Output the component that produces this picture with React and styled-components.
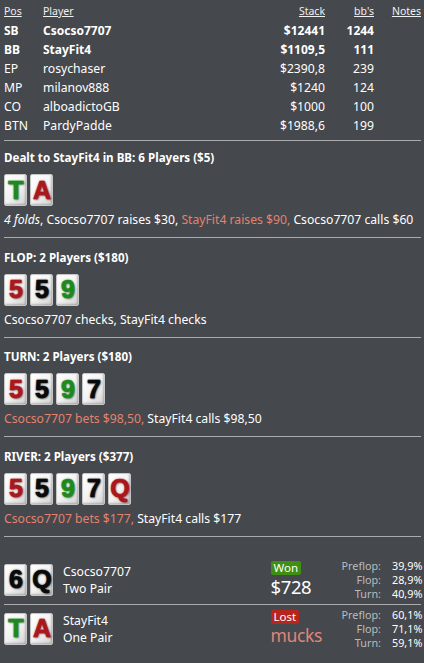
import styled, { createGlobalStyle } from 'styled-components'

const GlobalStyle = createGlobalStyle`
   html, body {
      margin: 0;
      background: #45484c;
   }
   body {
      font-family: 'Noto Sans', 'Open Sans', sans-serif;
      color: #ffffff;
      font-size: 12.2px;
   }
`

const Page = styled.div`
   padding: 0 3px 0 4px;
   width: 424px;
   box-sizing: border-box;
`

const PlayerTable = styled.div`
   display: grid;
   grid-template-columns: 39px 1fr auto 49px 47px;
   align-items: center;
   padding-top: 2px;
   padding-bottom: 5px;
`

const Head = styled.div`
   font-size: 10.5px;
   text-decoration: underline;
   text-align: ${(props) => (props.right ? 'right' : 'left')};
   line-height: 19px;
   color: #f0f0f0;
`

const Cell = styled.div`
   font-weight: ${(props) => (props.bold ? 700 : 400)};
   text-align: ${(props) => (props.right ? 'right' : 'left')};
   line-height: 19px;
   font-size: ${(props) => (props.bold ? '12px' : '12.2px')};
`

const Divider = styled.hr`
   border: 0;
   border-top: 1px solid #a9abad;
   margin: 0;
`

const Street = styled.section`
   padding: ${(props) => (props.first ? '8px' : '10.5px')} 0 8px;
   display: flex;
   flex-direction: column;
`

const Title = styled.div`
   font-weight: 700;
   font-size: 11.6px;
   line-height: 18px;
   margin-bottom: 7px;
`

const Cards = styled.div`
   display: flex;
   gap: 3px;
   margin-bottom: 5px;
`

const CardBox = styled.div`
   width: 23px;
   height: 32px;
   box-sizing: border-box;
   border: 1px solid #c6c6c6;
   border-radius: 2px;
   background: linear-gradient(135deg, #ffffff 0%, #f2f2f2 55%, #d2d2d2 100%);
   box-shadow: inset -1px -1px 2px rgba(0, 0, 0, 0.22);
   display: flex;
   align-items: center;
   justify-content: center;
   font-family: 'Liberation Sans', Arial, sans-serif;
   font-weight: 900;
   font-size: 25px;
   letter-spacing: -1px;
   color: ${(props) => props.tint};
   text-shadow: 0 0 2px ${(props) => props.tint}, 1px 1px 2px rgba(0, 0, 0, 0.4);
   -webkit-text-stroke: 0.7px ${(props) => props.tint};
`

const suitColor = {
   r: '#a8181c',
   g: '#1e8a1e',
   k: '#0a0a0a',
}

const Card = ({ rank, suit }) => <CardBox tint={suitColor[suit]}>{rank}</CardBox>

const Action = styled.div`
   line-height: 18px;
   white-space: nowrap;
`

const Hero = styled.span`
   color: #e3826f;
`

const Showdown = styled.div`
   display: grid;
   grid-template-columns: 59px 1fr 71px auto;
   align-items: center;
   padding: ${(props) => (props.last ? '3px 0 0' : '22px 0 3px')};
`

const Pair = styled.div`
   display: flex;
   gap: 3px;
`

const WhoCol = styled.div`
   line-height: 17px;
`

const ResultCol = styled.div`
   display: flex;
   flex-direction: column;
   align-items: flex-start;
`

const Badge = styled.span`
   background: ${(props) => (props.won ? '#3f8f14' : '#b7261d')};
   color: #fff;
   font-size: 11.5px;
   line-height: 13px;
   padding: 0 3px 1px;
   border-radius: 2px;
`

const Amount = styled.div`
   font-size: ${(props) => (props.lost ? '17.5px' : '18.5px')};
   letter-spacing: -0.4px;
   line-height: 23px;
   color: ${(props) => (props.lost ? '#e2857a' : '#ffffff')};
`

const Equity = styled.div`
   display: grid;
   grid-template-columns: auto 29px;
   column-gap: 11px;
   font-size: 10.8px;
   line-height: 14px;
   text-align: right;
`

const Label = styled.span`
   color: #b9bcbf;
`

const players = [
   ['SB', 'Csocso7707', '$12441', '1244', true],
   ['BB', 'StayFit4', '$1109,5', '111', true],
   ['EP', 'rosychaser', '$2390,8', '239'],
   ['MP', 'milanov888', '$1240', '124'],
   ['CO', 'alboadictoGB', '$1000', '100'],
   ['BTN', 'PardyPadde', '$1988,6', '199'],
]

const board = [
   ['5', 'r'],
   ['5', 'k'],
   ['9', 'g'],
   ['7', 'k'],
   ['Q', 'r'],
]

function Board({ n }) {
   return (
      <Cards>
         {board.slice(0, n).map(([r, s], i) => (
            <Card key={i} rank={r} suit={s} />
         ))}
      </Cards>
   )
}

function Odds({ rows }) {
   return (
      <Equity>
         {rows.map(([l, v]) => [<Label key={l}>{l}</Label>, <span key={l + 'v'}>{v}</span>])}
      </Equity>
   )
}

function App() {
   return (
      <Page>
         <GlobalStyle />
         <PlayerTable>
            <Head>Pos</Head>
            <Head>Player</Head>
            <Head right>Stack</Head>
            <Head right>bb's</Head>
            <Head right>Notes</Head>
            {players.map(([pos, name, stack, bb, bold]) => [
               <Cell key={pos} bold={bold}>{pos}</Cell>,
               <Cell key={pos + 'n'} bold={bold}>{name}</Cell>,
               <Cell key={pos + 's'} bold={bold} right>{stack}</Cell>,
               <Cell key={pos + 'b'} bold={bold} right>{bb}</Cell>,
               <Cell key={pos + 'x'} />,
            ])}
         </PlayerTable>
         <Divider />
         <Street first>
            <Title>Dealt to StayFit4 in BB: 6 Players ($5)</Title>
            <Cards>
               <Card rank="T" suit="g" />
               <Card rank="A" suit="r" />
            </Cards>
            <Action>
               <i>4 folds</i>, Csocso7707 raises $30, <Hero>StayFit4 raises $90,</Hero> Csocso7707 calls $60
            </Action>
         </Street>
         <Divider />
         <Street>
            <Title>FLOP: 2 Players ($180)</Title>
            <Board n={3} />
            <Action>Csocso7707 checks, StayFit4 checks</Action>
         </Street>
         <Divider />
         <Street>
            <Title>TURN: 2 Players ($180)</Title>
            <Board n={4} />
            <Action>
               <Hero>Csocso7707 bets $98,50,</Hero> StayFit4 calls $98,50
            </Action>
         </Street>
         <Divider />
         <Street>
            <Title>RIVER: 2 Players ($377)</Title>
            <Board n={5} />
            <Action>
               <Hero>Csocso7707 bets $177,</Hero> StayFit4 calls $177
            </Action>
         </Street>
         <Divider />
         <Showdown>
            <Pair>
               <Card rank="6" suit="k" />
               <Card rank="Q" suit="k" />
            </Pair>
            <WhoCol>
               <div>Csocso7707</div>
               <div>Two Pair</div>
            </WhoCol>
            <ResultCol>
               <Badge won>Won</Badge>
               <Amount>$728</Amount>
            </ResultCol>
            <Odds rows={[['Preflop:', '39,9%'], ['Flop:', '28,9%'], ['Turn:', '40,9%']]} />
         </Showdown>
         <Divider />
         <Showdown last>
            <Pair>
               <Card rank="T" suit="g" />
               <Card rank="A" suit="r" />
            </Pair>
            <WhoCol>
               <div>StayFit4</div>
               <div>One Pair</div>
            </WhoCol>
            <ResultCol>
               <Badge>Lost</Badge>
               <Amount lost>mucks</Amount>
            </ResultCol>
            <Odds rows={[['Preflop:', '60,1%'], ['Flop:', '71,1%'], ['Turn:', '59,1%']]} />
         </Showdown>
      </Page>
   )
}

export default App
